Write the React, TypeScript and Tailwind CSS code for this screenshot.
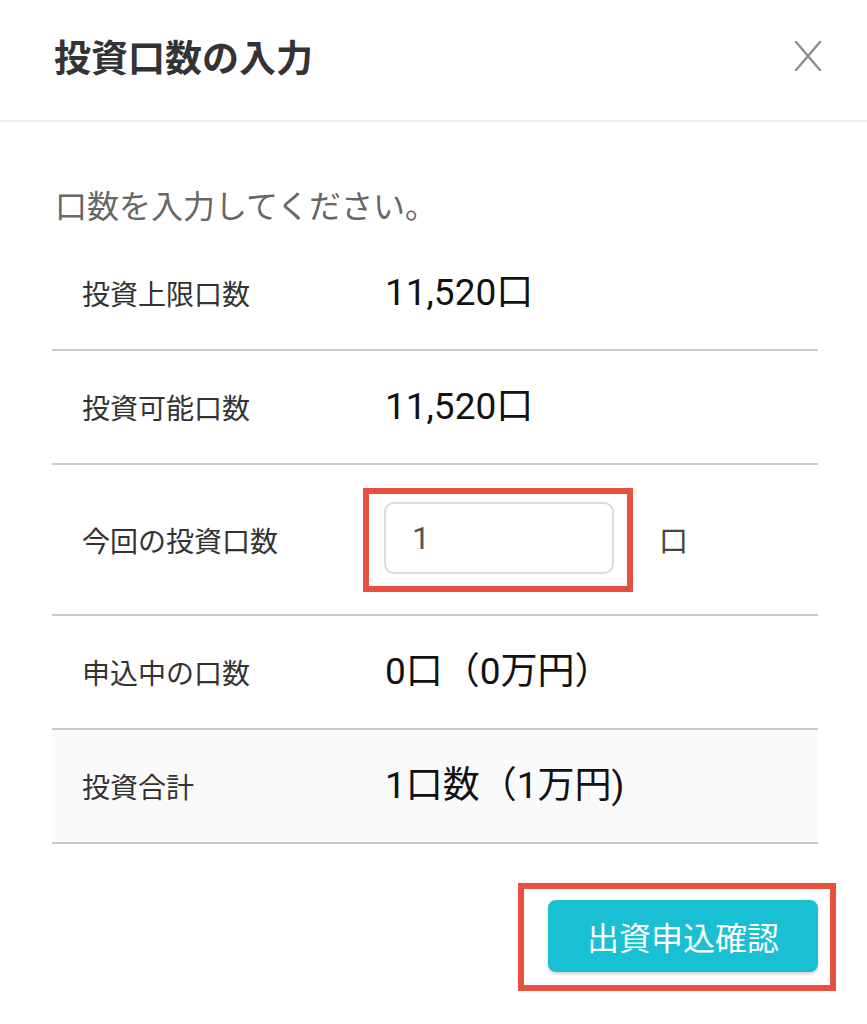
const jp = "font-['Noto_Sans_CJK_JP',sans-serif]";
const num = "font-[Roboto,'Noto_Sans_CJK_JP',sans-serif]";

function Row({ label, children, tall, shaded }: { label: string; children: React.ReactNode; tall?: boolean; shaded?: boolean }) {
  return (
    <div
      className={`flex items-center border-b-2 border-[#cacaca] ${tall ? "h-[151px]" : "h-[114px]"} ${
        shaded ? "bg-[#fafafa]" : "bg-white"
      }`}
    >
      <div className={`w-[333px] shrink-0 pl-[30px] text-[28px] text-[#333] ${jp}`}>{label}</div>
      <div className="flex items-center">{children}</div>
    </div>
  );
}

export default function App() {
  return (
    <div className={`w-[867px] h-[1024px] bg-white ${jp}`}>
      {/* Header */}
      <div className="flex items-center justify-between h-[122px] pb-[8px] pl-[54px] pr-[44px] border-b-2 border-[#ececec]">
        <h1 className="text-[37px] font-bold text-[#333] leading-none">投資口数の入力</h1>
        <button className="w-[30px] h-[32px] flex items-center justify-center">
          <svg width="28" height="30" viewBox="0 0 28 30" fill="none" stroke="#8c8c8c" strokeWidth="2.4" strokeLinecap="square">
            <path d="M2 1 L26 29" />
            <path d="M26 1 L2 29" />
          </svg>
        </button>
      </div>

      {/* Body */}
      <div className="pl-[52px] pr-[49px]">
        <p className="pl-[3px] mt-[59px] text-[32px] leading-[46px] text-[#666]">口数を入力してください。</p>

        <div className="mt-[10px]">
          <Row label="投資上限口数">
            <span className={`text-[37px] text-[#111] ${num}`}>11,520口</span>
          </Row>
          <Row label="投資可能口数">
            <span className={`text-[37px] text-[#111] ${num}`}>11,520口</span>
          </Row>
          <Row label="今回の投資口数" tall>
            <div className="ml-[-22px] border-[6px] border-[#e8503f] pl-[15px] pr-[13px] pt-[8px] pb-[12px]">
              <input
                defaultValue="1"
                className={`w-[230px] h-[72px] border-2 border-[#dcdcdc] rounded-[10px] px-[26px] text-[32px] text-[#555] outline-none ${num}`}
              />
            </div>
            <span className="ml-[26px] text-[29px] text-[#444]">口</span>
          </Row>
          <Row label="申込中の口数">
            <span className={`text-[37px] text-[#111] ${num}`}>0口（0万円）</span>
          </Row>
          <Row label="投資合計" shaded>
            <span className={`text-[37px] text-[#111] ${num}`}>1口数（1万円)</span>
          </Row>
        </div>

        {/* Action */}
        <div className="flex justify-end mt-[39px] mr-[-18px]">
          <div className="border-[6px] border-[#e8503f] pl-[24px] pr-[12px] pt-[11px] pb-[13px]">
            <button className="w-[270px] h-[72px] rounded-[8px] bg-[#19bfd3] text-white text-[32px] font-normal shadow-[0_2px_3px_rgba(0,0,0,0.18)]">
              出資申込確認
            </button>
          </div>
        </div>
      </div>
    </div>
  );
}
